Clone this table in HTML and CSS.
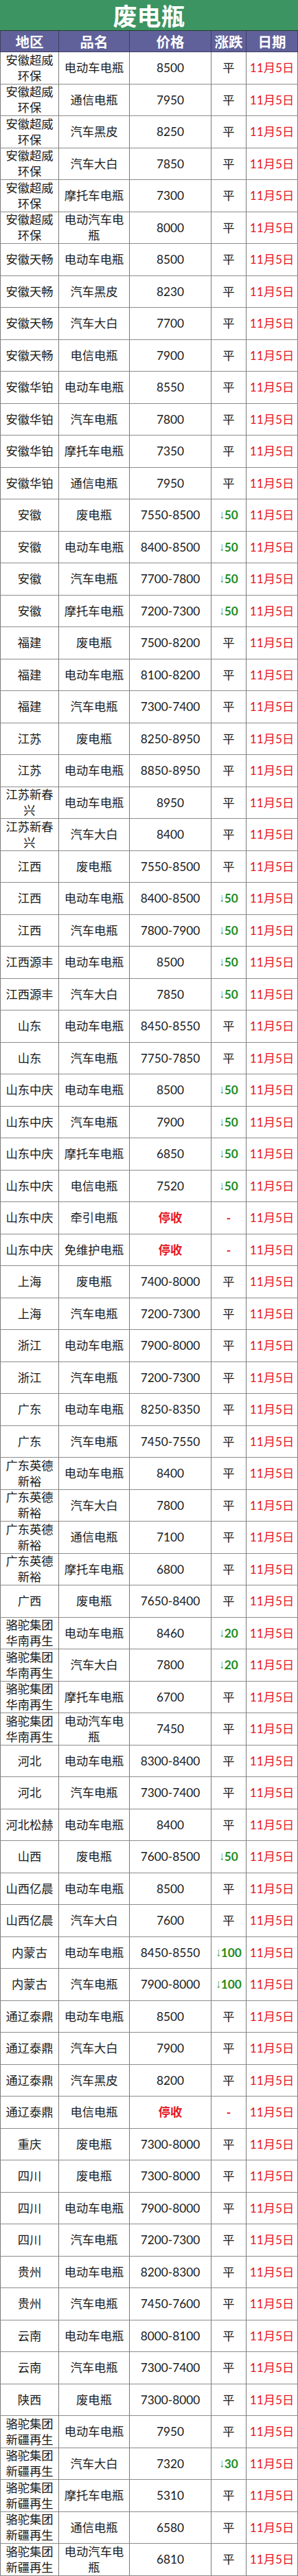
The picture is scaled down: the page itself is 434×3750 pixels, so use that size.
FILE: index.html
```html
<!DOCTYPE html>
<html lang="zh-CN">
<head>
<meta charset="utf-8">
<title>废电瓶</title>
<link rel="stylesheet" href="styles.css">
</head>
<body>
<div class="sheet">
  <div class="title">废电瓶</div>
  <div class="row head"><div>地区</div><div>品名</div><div>价格</div><div>涨跌</div><div>日期</div></div>

  <div class="row"><div>安徽超威环保</div><div>电动车电瓶</div><div>8500</div><div>平</div><div class="d">11月5日</div></div>
  <div class="row"><div>安徽超威环保</div><div>通信电瓶</div><div>7950</div><div>平</div><div class="d">11月5日</div></div>
  <div class="row"><div>安徽超威环保</div><div>汽车黑皮</div><div>8250</div><div>平</div><div class="d">11月5日</div></div>
  <div class="row"><div>安徽超威环保</div><div>汽车大白</div><div>7850</div><div>平</div><div class="d">11月5日</div></div>
  <div class="row"><div>安徽超威环保</div><div>摩托车电瓶</div><div>7300</div><div>平</div><div class="d">11月5日</div></div>
  <div class="row"><div>安徽超威环保</div><div>电动汽车电瓶</div><div>8000</div><div>平</div><div class="d">11月5日</div></div>
  <div class="row"><div>安徽天畅</div><div>电动车电瓶</div><div>8500</div><div>平</div><div class="d">11月5日</div></div>
  <div class="row"><div>安徽天畅</div><div>汽车黑皮</div><div>8230</div><div>平</div><div class="d">11月5日</div></div>
  <div class="row"><div>安徽天畅</div><div>汽车大白</div><div>7700</div><div>平</div><div class="d">11月5日</div></div>
  <div class="row"><div>安徽天畅</div><div>电信电瓶</div><div>7900</div><div>平</div><div class="d">11月5日</div></div>
  <div class="row"><div>安徽华铂</div><div>电动车电瓶</div><div>8550</div><div>平</div><div class="d">11月5日</div></div>
  <div class="row"><div>安徽华铂</div><div>汽车电瓶</div><div>7800</div><div>平</div><div class="d">11月5日</div></div>
  <div class="row"><div>安徽华铂</div><div>摩托车电瓶</div><div>7350</div><div>平</div><div class="d">11月5日</div></div>
  <div class="row"><div>安徽华铂</div><div>通信电瓶</div><div>7950</div><div>平</div><div class="d">11月5日</div></div>
  <div class="row"><div>安徽</div><div>废电瓶</div><div>7550-8500</div><div class="dn"><span class="ar">↓</span>50</div><div class="d">11月5日</div></div>
  <div class="row"><div>安徽</div><div>电动车电瓶</div><div>8400-8500</div><div class="dn"><span class="ar">↓</span>50</div><div class="d">11月5日</div></div>
  <div class="row"><div>安徽</div><div>汽车电瓶</div><div>7700-7800</div><div class="dn"><span class="ar">↓</span>50</div><div class="d">11月5日</div></div>
  <div class="row"><div>安徽</div><div>摩托车电瓶</div><div>7200-7300</div><div class="dn"><span class="ar">↓</span>50</div><div class="d">11月5日</div></div>
  <div class="row"><div>福建</div><div>废电瓶</div><div>7500-8200</div><div>平</div><div class="d">11月5日</div></div>
  <div class="row"><div>福建</div><div>电动车电瓶</div><div>8100-8200</div><div>平</div><div class="d">11月5日</div></div>
  <div class="row"><div>福建</div><div>汽车电瓶</div><div>7300-7400</div><div>平</div><div class="d">11月5日</div></div>
  <div class="row"><div>江苏</div><div>废电瓶</div><div>8250-8950</div><div>平</div><div class="d">11月5日</div></div>
  <div class="row"><div>江苏</div><div>电动车电瓶</div><div>8850-8950</div><div>平</div><div class="d">11月5日</div></div>
  <div class="row"><div>江苏新春兴</div><div>电动车电瓶</div><div>8950</div><div>平</div><div class="d">11月5日</div></div>
  <div class="row"><div>江苏新春兴</div><div>汽车大白</div><div>8400</div><div>平</div><div class="d">11月5日</div></div>
  <div class="row"><div>江西</div><div>废电瓶</div><div>7550-8500</div><div>平</div><div class="d">11月5日</div></div>
  <div class="row"><div>江西</div><div>电动车电瓶</div><div>8400-8500</div><div class="dn"><span class="ar">↓</span>50</div><div class="d">11月5日</div></div>
  <div class="row"><div>江西</div><div>汽车电瓶</div><div>7800-7900</div><div class="dn"><span class="ar">↓</span>50</div><div class="d">11月5日</div></div>
  <div class="row"><div>江西源丰</div><div>电动车电瓶</div><div>8500</div><div class="dn"><span class="ar">↓</span>50</div><div class="d">11月5日</div></div>
  <div class="row"><div>江西源丰</div><div>汽车大白</div><div>7850</div><div class="dn"><span class="ar">↓</span>50</div><div class="d">11月5日</div></div>
  <div class="row"><div>山东</div><div>电动车电瓶</div><div>8450-8550</div><div>平</div><div class="d">11月5日</div></div>
  <div class="row"><div>山东</div><div>汽车电瓶</div><div>7750-7850</div><div>平</div><div class="d">11月5日</div></div>
  <div class="row"><div>山东中庆</div><div>电动车电瓶</div><div>8500</div><div class="dn"><span class="ar">↓</span>50</div><div class="d">11月5日</div></div>
  <div class="row"><div>山东中庆</div><div>汽车电瓶</div><div>7900</div><div class="dn"><span class="ar">↓</span>50</div><div class="d">11月5日</div></div>
  <div class="row"><div>山东中庆</div><div>摩托车电瓶</div><div>6850</div><div class="dn"><span class="ar">↓</span>50</div><div class="d">11月5日</div></div>
  <div class="row"><div>山东中庆</div><div>电信电瓶</div><div>7520</div><div class="dn"><span class="ar">↓</span>50</div><div class="d">11月5日</div></div>
  <div class="row"><div>山东中庆</div><div>牵引电瓶</div><div class="stop">停收</div><div class="dash">-</div><div class="d">11月5日</div></div>
  <div class="row"><div>山东中庆</div><div>免维护电瓶</div><div class="stop">停收</div><div class="dash">-</div><div class="d">11月5日</div></div>
  <div class="row"><div>上海</div><div>废电瓶</div><div>7400-8000</div><div>平</div><div class="d">11月5日</div></div>
  <div class="row"><div>上海</div><div>汽车电瓶</div><div>7200-7300</div><div>平</div><div class="d">11月5日</div></div>
  <div class="row"><div>浙江</div><div>电动车电瓶</div><div>7900-8000</div><div>平</div><div class="d">11月5日</div></div>
  <div class="row"><div>浙江</div><div>汽车电瓶</div><div>7200-7300</div><div>平</div><div class="d">11月5日</div></div>
  <div class="row"><div>广东</div><div>电动车电瓶</div><div>8250-8350</div><div>平</div><div class="d">11月5日</div></div>
  <div class="row"><div>广东</div><div>汽车电瓶</div><div>7450-7550</div><div>平</div><div class="d">11月5日</div></div>
  <div class="row"><div>广东英德新裕</div><div>电动车电瓶</div><div>8400</div><div>平</div><div class="d">11月5日</div></div>
  <div class="row"><div>广东英德新裕</div><div>汽车大白</div><div>7800</div><div>平</div><div class="d">11月5日</div></div>
  <div class="row"><div>广东英德新裕</div><div>通信电瓶</div><div>7100</div><div>平</div><div class="d">11月5日</div></div>
  <div class="row"><div>广东英德新裕</div><div>摩托车电瓶</div><div>6800</div><div>平</div><div class="d">11月5日</div></div>
  <div class="row"><div>广西</div><div>废电瓶</div><div>7650-8400</div><div>平</div><div class="d">11月5日</div></div>
  <div class="row"><div>骆驼集团华南再生</div><div>电动车电瓶</div><div>8460</div><div class="dn"><span class="ar">↓</span>20</div><div class="d">11月5日</div></div>
  <div class="row"><div>骆驼集团华南再生</div><div>汽车大白</div><div>7800</div><div class="dn"><span class="ar">↓</span>20</div><div class="d">11月5日</div></div>
  <div class="row"><div>骆驼集团华南再生</div><div>摩托车电瓶</div><div>6700</div><div>平</div><div class="d">11月5日</div></div>
  <div class="row"><div>骆驼集团华南再生</div><div>电动汽车电瓶</div><div>7450</div><div>平</div><div class="d">11月5日</div></div>
  <div class="row"><div>河北</div><div>电动车电瓶</div><div>8300-8400</div><div>平</div><div class="d">11月5日</div></div>
  <div class="row"><div>河北</div><div>汽车电瓶</div><div>7300-7400</div><div>平</div><div class="d">11月5日</div></div>
  <div class="row"><div>河北松赫</div><div>电动车电瓶</div><div>8400</div><div>平</div><div class="d">11月5日</div></div>
  <div class="row"><div>山西</div><div>废电瓶</div><div>7600-8500</div><div class="dn"><span class="ar">↓</span>50</div><div class="d">11月5日</div></div>
  <div class="row"><div>山西亿晨</div><div>电动车电瓶</div><div>8500</div><div>平</div><div class="d">11月5日</div></div>
  <div class="row"><div>山西亿晨</div><div>汽车大白</div><div>7600</div><div>平</div><div class="d">11月5日</div></div>
  <div class="row"><div>内蒙古</div><div>电动车电瓶</div><div>8450-8550</div><div class="dn"><span class="ar">↓</span>100</div><div class="d">11月5日</div></div>
  <div class="row"><div>内蒙古</div><div>汽车电瓶</div><div>7900-8000</div><div class="dn"><span class="ar">↓</span>100</div><div class="d">11月5日</div></div>
  <div class="row"><div>通辽泰鼎</div><div>电动车电瓶</div><div>8500</div><div>平</div><div class="d">11月5日</div></div>
  <div class="row"><div>通辽泰鼎</div><div>汽车大白</div><div>7900</div><div>平</div><div class="d">11月5日</div></div>
  <div class="row"><div>通辽泰鼎</div><div>汽车黑皮</div><div>8200</div><div>平</div><div class="d">11月5日</div></div>
  <div class="row"><div>通辽泰鼎</div><div>电信电瓶</div><div class="stop">停收</div><div class="dash">-</div><div class="d">11月5日</div></div>
  <div class="row"><div>重庆</div><div>废电瓶</div><div>7300-8000</div><div>平</div><div class="d">11月5日</div></div>
  <div class="row"><div>四川</div><div>废电瓶</div><div>7300-8000</div><div>平</div><div class="d">11月5日</div></div>
  <div class="row"><div>四川</div><div>电动车电瓶</div><div>7900-8000</div><div>平</div><div class="d">11月5日</div></div>
  <div class="row"><div>四川</div><div>汽车电瓶</div><div>7200-7300</div><div>平</div><div class="d">11月5日</div></div>
  <div class="row"><div>贵州</div><div>电动车电瓶</div><div>8200-8300</div><div>平</div><div class="d">11月5日</div></div>
  <div class="row"><div>贵州</div><div>汽车电瓶</div><div>7450-7600</div><div>平</div><div class="d">11月5日</div></div>
  <div class="row"><div>云南</div><div>电动车电瓶</div><div>8000-8100</div><div>平</div><div class="d">11月5日</div></div>
  <div class="row"><div>云南</div><div>汽车电瓶</div><div>7300-7400</div><div>平</div><div class="d">11月5日</div></div>
  <div class="row"><div>陕西</div><div>废电瓶</div><div>7300-8000</div><div>平</div><div class="d">11月5日</div></div>
  <div class="row"><div>骆驼集团新疆再生</div><div>电动车电瓶</div><div>7950</div><div>平</div><div class="d">11月5日</div></div>
  <div class="row"><div>骆驼集团新疆再生</div><div>汽车大白</div><div>7320</div><div class="dn"><span class="ar">↓</span>30</div><div class="d">11月5日</div></div>
  <div class="row"><div>骆驼集团新疆再生</div><div>摩托车电瓶</div><div>5310</div><div>平</div><div class="d">11月5日</div></div>
  <div class="row"><div>骆驼集团新疆再生</div><div>通信电瓶</div><div>6580</div><div>平</div><div class="d">11月5日</div></div>
  <div class="row"><div>骆驼集团新疆再生</div><div>电动汽车电瓶</div><div>6810</div><div>平</div><div class="d">11月5日</div></div>
</div>
</body>
</html>
```

FILE: styles.css
```css
html, body {
  margin: 0;
  padding: 0;
  background: #ffffff;
}

.sheet {
  width: 434px;
  font-family: "Lato", "Noto Sans CJK SC", sans-serif;
  font-size: 17.3px;
  color: #1a1a1a;
}

.title {
  height: 45px;
  box-sizing: border-box;
  background: #3b9462;
  color: #ffffff;
  font-family: "Noto Sans CJK SC", sans-serif;
  font-weight: 700;
  font-size: 35px;
  line-height: 44px;
  text-align: center;
  border-bottom: 1px solid #2a3a30;
}

.row {
  display: grid;
  grid-template-columns: 86px 103px 119px 51px 75px;
  height: 46.5px;
}

.row > div {
  box-sizing: border-box;
  display: flex;
  align-items: center;
  justify-content: center;
  text-align: center;
  line-height: 23px;
  border-right: 1px solid #7a7a7a;
  border-bottom: 1px solid #8c8c8c;
  overflow: hidden;
  white-space: normal;
  word-break: break-all;
}

.row > div:first-child {
  border-left: 1px solid #7a7a7a;
}

.row.head {
  height: 31px;
  background: #60619a;
  color: #ffffff;
  font-family: "Noto Sans CJK SC", sans-serif;
  font-weight: 700;
  font-size: 20.5px;
}

.row.head > div {
  border-right: 1px solid #3e3e62;
  border-bottom: 1px solid #3e3e62;
  line-height: 30px;
}

.row.head > div:first-child {
  border-left: 1px solid #3e3e62;
}

.d {
  color: #e8151f;
}

.dn {
  color: #1f8c1f;
  font-weight: 700;
}

.ar {
  font-family: "Liberation Sans", sans-serif;
  font-weight: 400;
  display: inline-block;
  transform: scaleX(0.8);
  margin-right: -1px;
}

.stop {
  color: #e8151f;
  font-weight: 700;
}

.dash {
  color: #e8151f;
  font-weight: 700;
}
```
